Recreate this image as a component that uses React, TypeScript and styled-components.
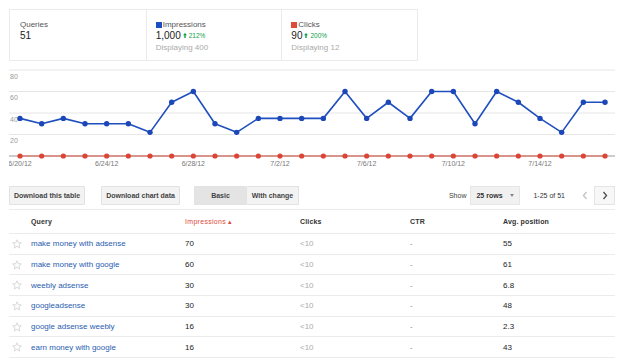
import React, { FC } from 'react';
import styled, { createGlobalStyle } from 'styled-components';

const GlobalStyle = createGlobalStyle`
  html, body {
    margin: 0;
    padding: 0;
    background: #fff;
  }
  body {
    font-family: "Liberation Sans", Arial, sans-serif;
    color: #222;
  }
`;

const Page = styled.div`
  width: 606px;
  padding: 9px 0 0 9px;
`;

const StatsRow = styled.div`
  display: flex;
  width: 409px;
  height: 52px;
  box-sizing: border-box;
  border: 1px solid #ebebeb;
`;

const StatCell = styled.div`
  flex: 1;
  padding: 9px 0 0 10px;
  & + & {
    border-left: 1px solid #ebebeb;
    padding-left: 9px;
  }
`;

const StatTitle = styled.div`
  display: flex;
  align-items: center;
  height: 11px;
  font-size: 8px;
  color: #555;
`;

const Swatch = styled.span<{ $color: string }>`
  width: 6px;
  height: 6px;
  margin-right: 1px;
  background: ${(p) => p.$color};
`;

const StatValue = styled.div`
  display: flex;
  align-items: center;
  height: 11.5px;
  font-size: 10px;
  color: #222;
`;

const Delta = styled.span`
  display: inline-flex;
  align-items: center;
  margin-left: 2px;
  font-size: 6.5px;
  color: #109d47;
`;

const StatSub = styled.div`
  height: 11px;
  line-height: 11px;
  font-size: 8px;
  color: #aaa;
`;

const ChartSvg = styled.svg`
  display: block;
  width: 606px;
  height: 112px;
`;

const Toolbar = styled.div`
  display: flex;
  align-items: center;
  height: 19px;
  margin-top: 13px;
  padding-bottom: 4px;
  border-bottom: 1px solid #ebebeb;
`;

const Button = styled.button<{ $active?: boolean }>`
  height: 19px;
  padding: 0 4px;
  box-sizing: border-box;
  border: 1px solid #e2e2e2;
  border-radius: 1px;
  background: ${(p) => (p.$active ? '#e4e4e4' : '#f3f3f3')};
  font-family: inherit;
  font-size: 7px;
  font-weight: bold;
  color: #444;
  margin-right: ${(p) => (p.$active === undefined ? '16px' : '0')};
`;

const Segment = styled.div`
  display: flex;
  margin-left: -2px;
  & > ${Button} {
    width: 53px;
  }
  & > ${Button} + ${Button} {
    border-left: none;
    width: 52px;
  }
`;

const Pager = styled.div`
  display: flex;
  align-items: center;
  margin-left: auto;
  font-size: 7px;
  color: #444;
`;

const Select = styled.div`
  display: flex;
  align-items: center;
  justify-content: space-between;
  width: 50px;
  height: 19px;
  box-sizing: border-box;
  margin: 0 13px 0 4px;
  padding: 0 5px;
  background: #f1f1f1;
  border: 1px solid #e6e6e6;
  font-weight: bold;
  color: #333;
`;

const Caret = styled.span`
  width: 0;
  height: 0;
  border-left: 2.5px solid transparent;
  border-right: 2.5px solid transparent;
  border-top: 3px solid #888;
`;

const RangeText = styled.span`
  font-size: 7px;
  color: #333;
  margin-right: 10px;
`;

const NavButton = styled.div<{ $enabled?: boolean }>`
  display: flex;
  align-items: center;
  justify-content: center;
  width: ${(p) => (p.$enabled ? '21px' : '19px')};
  height: 19px;
  box-sizing: border-box;
  border: 1px solid ${(p) => (p.$enabled ? '#e4e4e4' : 'transparent')};
  background: ${(p) => (p.$enabled ? '#f7f7f7' : 'transparent')};
`;

const Grid = styled.div`
  display: grid;
  grid-template-columns: 22px 154px 115px 110px 93px 1fr;
  align-items: center;
  box-sizing: border-box;
  border-bottom: 1px solid #ebebeb;
`;

const HeaderRow = styled(Grid)`
  height: 24px;
  font-size: 7px;
  font-weight: bold;
  color: #333;
  letter-spacing: 0.15px;
`;

const SortedHead = styled.span`
  color: #dd4b39;
  font-weight: normal;
  letter-spacing: 0.3px;
`;

const Row = styled(Grid)`
  height: 20.7px;
  font-size: 8px;
  color: #222;
`;

const StarCell = styled.span`
  display: flex;
  padding-left: 3px;
`;

const QueryLink = styled.a`
  color: #2a5db0;
  text-decoration: none;
`;

const Muted = styled.span<{ $tone?: string }>`
  color: ${(p) => p.$tone || '#aaa'};
`;

const values = [35, 30, 35, 30, 30, 30, 22, 50, 60, 30, 22, 35, 35, 35, 35, 60, 35, 50, 35, 60, 60, 30, 60, 50, 35, 22, 50, 50];
const dateLabels = ['6/20/12', '6/24/12', '6/28/12', '7/2/12', '7/6/12', '7/10/12', '7/14/12'];

const px = (i: number) => 11 + i * 21.667;
const py = (v: number) => 95 - v * 1.075;

const rows = [
  { q: 'make money with adsense', imp: '70', pos: '55' },
  { q: 'make money with google', imp: '60', pos: '61' },
  { q: 'weebly adsense', imp: '30', pos: '6.8' },
  { q: 'googleadsense', imp: '30', pos: '48' },
  { q: 'google adsense weebly', imp: '16', pos: '2.3' },
  { q: 'earn money with google', imp: '16', pos: '43' },
];

const Chart: FC = () => {
  const blue = values.map((v, i) => `${px(i)},${py(v)}`).join(' ');
  return (
    <ChartSvg viewBox="0 0 606 112">
      {[80, 60, 40, 20].map((v) => (
        <g key={v}>
          <line x1={0} x2={606} y1={py(v)} y2={py(v)} stroke="#e6e6e6" strokeWidth={1} />
          <text x={1} y={py(v) + 8.5} fontSize={7} fill="#9a9a9a">
            {v}
          </text>
        </g>
      ))}
      <line x1={0} x2={606} y1={95} y2={95} stroke="#9a9a9a" strokeWidth={1.2} />
      <line x1={px(0)} x2={px(27)} y1={95} y2={95} stroke="#e35b4b" strokeWidth={1.2} />
      {values.map((_, i) => (
        <circle key={'r' + i} cx={px(i)} cy={95} r={2.6} fill="#dc4535" />
      ))}
      <polyline points={blue} fill="none" stroke="#1f4fbf" strokeWidth={1.6} strokeLinejoin="round" />
      {values.map((v, i) => (
        <circle key={'b' + i} cx={px(i)} cy={py(v)} r={2.7} fill="#1c47b8" />
      ))}
      {dateLabels.map((d, k) => (
        <text key={d} x={px(k * 4)} y={104.5} fontSize={7} fill="#777" textAnchor="middle">
          {d}
        </text>
      ))}
    </ChartSvg>
  );
};

const UpArrow: FC = () => (
  <svg width="4" height="5" viewBox="0 0 4 5" style={{ marginRight: 2 }}>
    <path d="M2 0 L4 2.2 H2.7 V5 H1.3 V2.2 H0 Z" fill="#109d47" />
  </svg>
);

const Star: FC = () => (
  <svg width="10" height="10" viewBox="0 0 10 10">
    <path
      d="M5 0.8 L6.2 3.7 L9.3 3.9 L6.9 5.9 L7.7 9 L5 7.3 L2.3 9 L3.1 5.9 L0.7 3.9 L3.8 3.7 Z"
      fill="none"
      stroke="#cfcfcf"
      strokeWidth={0.8}
      strokeLinejoin="round"
    />
  </svg>
);

const Chevron: FC<{ dir: 'left' | 'right'; color: string }> = ({ dir, color }) => (
  <svg width="6" height="9" viewBox="0 0 6 9">
    <path
      d={dir === 'left' ? 'M4.5 1 L1.5 4.5 L4.5 8' : 'M1.5 1 L4.5 4.5 L1.5 8'}
      fill="none"
      stroke={color}
      strokeWidth={1.4}
    />
  </svg>
);

const App: FC = () => (
  <Page>
    <GlobalStyle />
    <StatsRow>
      <StatCell>
        <StatTitle>Queries</StatTitle>
        <StatValue>51</StatValue>
      </StatCell>
      <StatCell>
        <StatTitle>
          <Swatch $color="#1c4fc4" />
          Impressions
        </StatTitle>
        <StatValue>
          1,000
          <Delta>
            <UpArrow />
            212%
          </Delta>
        </StatValue>
        <StatSub>Displaying 400</StatSub>
      </StatCell>
      <StatCell>
        <StatTitle>
          <Swatch $color="#dd4b39" />
          Clicks
        </StatTitle>
        <StatValue>
          90
          <Delta>
            <UpArrow />
            200%
          </Delta>
        </StatValue>
        <StatSub>Displaying 12</StatSub>
      </StatCell>
    </StatsRow>

    <Chart />

    <Toolbar>
      <Button>Download this table</Button>
      <Button>Download chart data</Button>
      <Segment>
        <Button $active>Basic</Button>
        <Button $active={false}>With change</Button>
      </Segment>
      <Pager>
        Show
        <Select>
          25 rows
          <Caret />
        </Select>
        <RangeText>1-25 of 51</RangeText>
        <NavButton>
          <Chevron dir="left" color="#c4c4c4" />
        </NavButton>
        <NavButton $enabled>
          <Chevron dir="right" color="#555" />
        </NavButton>
      </Pager>
    </Toolbar>

    <HeaderRow>
      <span />
      <span>Query</span>
      <SortedHead>Impressions ▴</SortedHead>
      <span>Clicks</span>
      <span>CTR</span>
      <span>Avg. position</span>
    </HeaderRow>
    {rows.map((r) => (
      <Row key={r.q}>
        <StarCell>
          <Star />
        </StarCell>
        <QueryLink href="#">{r.q}</QueryLink>
        <span>{r.imp}</span>
        <Muted>&lt;10</Muted>
        <Muted $tone="#888">-</Muted>
        <span>{r.pos}</span>
      </Row>
    ))}
  </Page>
);

export default App;
